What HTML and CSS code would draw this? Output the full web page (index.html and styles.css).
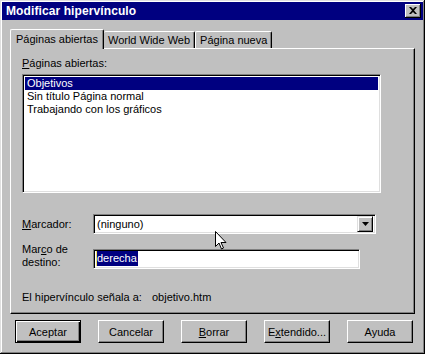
FILE: index.html
```html
<!DOCTYPE html>
<html lang="es">
<head>
<meta charset="utf-8">
<title>Modificar hipervínculo</title>
<link rel="stylesheet" href="styles.css">
</head>
<body>
<div class="window">
  <div class="titlebar">
    <span class="title">Modificar hipervínculo</span>
    <span class="close"><svg width="8" height="7" viewBox="0 0 8 7"><path d="M0 0h2l2 2 2-2h2L5 3.5 8 7H6L4 5 2 7H0l3-3.5z" fill="#000"/></svg></span>
  </div>
  <div class="content">
    <div class="tabs">
      <div class="tab active">Páginas abiertas</div>
      <div class="tab">World Wide Web</div>
      <div class="tab">Página nueva</div>
    </div>
    <div class="panel">
      <div class="label-top"><u>P</u>áginas abiertas:</div>
      <div class="listbox">
        <div class="item selected">Objetivos</div>
        <div class="item">Sin título Página normal</div>
        <div class="item">Trabajando con los gráficos</div>
      </div>
      <div class="field-row row-marcador">
        <div class="field-label"><u>M</u>arcador:</div>
        <div class="combo">
          <span class="combo-text">(ninguno)</span>
          <span class="drop"><svg width="7" height="4" viewBox="0 0 7 4"><path d="M0 0h7L3.5 4z" fill="#000"/></svg></span>
        </div>
      </div>
      <div class="field-row row-marco">
        <div class="field-label">Mar<u>c</u>o de<br>destino:</div>
        <div class="textbox"><span class="caret"></span><span class="sel">derecha</span></div>
      </div>
      <div class="info">
        <span class="info-label">El hipervínculo señala a:</span>
        <span class="info-value">objetivo.htm</span>
      </div>
    </div>
    <div class="buttons">
      <div class="btn default"><span>Aceptar</span></div>
      <div class="btn"><span>Cancelar</span></div>
      <div class="btn"><span><u>B</u>orrar</span></div>
      <div class="btn"><span>E<u>x</u>tendido...</span></div>
      <div class="btn"><span>Ayuda</span></div>
    </div>
  </div>
  <svg class="cursor" width="12" height="19" viewBox="0 0 12 19"><path d="M0.5 0.5v15l3.5-3.5 2.5 6 2-1-2.5-5.5h5z" fill="#fff" stroke="#000" stroke-width="1"/></svg>
</div>
</body>
</html>
```

FILE: styles.css
```css
html, body {
  margin: 0;
  padding: 0;
  background: #c0c0c0;
}
body {
  font-family: "Liberation Sans", Arial, sans-serif;
  font-size: 11px;
  color: #000;
}
.window {
  position: relative;
  width: 425px;
  height: 354px;
  box-sizing: border-box;
  padding: 2px;
  background: #c0c0c0;
  box-shadow: inset -1px -1px #000, inset 1px 1px #dfdfdf, inset -2px -2px #808080, inset 2px 2px #fff;
  overflow: hidden;
}
.titlebar {
  height: 18px;
  background: #000080;
  display: flex;
  align-items: center;
  justify-content: space-between;
  padding: 0 2px 0 4px;
}
.title {
  color: #fff;
  font-weight: bold;
  font-size: 12px;
  letter-spacing: 0.1px;
}
.close {
  width: 16px;
  height: 14px;
  box-sizing: border-box;
  background: #c0c0c0;
  box-shadow: inset -1px -1px #000, inset 1px 1px #fff, inset -2px -2px #808080;
  display: flex;
  align-items: center;
  justify-content: center;
  padding: 0 1px 1px 0;
}
.content {
  padding: 9px 8px 0 8px;
}
.tabs {
  display: flex;
  align-items: flex-end;
  height: 19px;
  position: relative;
  z-index: 2;
}
.tab {
  height: 17px;
  box-sizing: border-box;
  padding: 1px 4px 0 4px;
  line-height: 15px;
  border-top: 1px solid #fff;
  border-left: 1px solid #fff;
  border-right: 1px solid #000;
  box-shadow: inset -1px 0 #808080;
  border-radius: 2px 2px 0 0;
  white-space: nowrap;
  background: #c0c0c0;
}
.tab.active {
  height: 20px;
  margin-bottom: -1px;
  padding: 2px 5px 0 5px;
  line-height: 15px;
}
.tabs .tab.active + .tab {
  border-left: none;
}
.panel {
  height: 266px;
  box-sizing: border-box;
  border-top: 1px solid #fff;
  border-left: 1px solid #fff;
  border-right: 1px solid #000;
  border-bottom: 1px solid #000;
  box-shadow: inset -1px -1px #808080;
  padding: 8px 11px 0 11px;
  display: flex;
  flex-direction: column;
}
.label-top {
  height: 17px;
  line-height: 13px;
}
u { text-decoration: underline; text-underline-offset: 1px; }
.listbox {
  width: 359px;
  height: 119px;
  box-sizing: border-box;
  background: #fff;
  border-top: 1px solid #808080;
  border-left: 1px solid #808080;
  border-right: 1px solid #fff;
  border-bottom: 1px solid #fff;
  box-shadow: inset 1px 1px #000, inset -1px -1px #dfdfdf;
  padding: 2px 2px;
}
.item {
  height: 13px;
  line-height: 13px;
  padding-left: 2px;
  white-space: nowrap;
}
.item.selected {
  background: #000080;
  color: #fff;
}
.field-row {
  display: flex;
  align-items: center;
}
.row-marcador {
  margin-top: 21px;
}
.row-marco {
  margin-top: 14px;
}
.field-label {
  width: 71px;
  line-height: 13px;
}
.row-marco .field-label {
  margin-top: -5px;
}
.combo, .textbox {
  height: 20px;
  box-sizing: border-box;
  background: #fff;
  border-top: 1px solid #808080;
  border-left: 1px solid #808080;
  border-right: 1px solid #fff;
  border-bottom: 1px solid #fff;
  box-shadow: inset 1px 1px #000, inset -1px -1px #dfdfdf;
  display: flex;
  align-items: center;
}
.combo {
  width: 283px;
  padding: 0 2px 0 3px;
  justify-content: space-between;
}
.combo-text {
  line-height: 16px;
}
.drop {
  width: 16px;
  height: 16px;
  box-sizing: border-box;
  background: #c0c0c0;
  border-top: 1px solid #dfdfdf;
  border-left: 1px solid #dfdfdf;
  border-right: 1px solid #000;
  border-bottom: 1px solid #000;
  box-shadow: inset 1px 1px #fff, inset -1px -1px #808080;
  display: flex;
  align-items: center;
  justify-content: center;
}
.textbox {
  width: 267px;
  padding-left: 2px;
}
.caret {
  width: 1px;
  height: 15px;
  background: #f0e060;
}
.sel {
  background: #000080;
  color: #fff;
  line-height: 15px;
  height: 15px;
  padding-right: 1px;
}
.info {
  margin-top: 22px;
  display: flex;
  line-height: 13px;
}
.info-label {
  width: 130px;
}
.buttons {
  display: flex;
  gap: 17px;
  margin-top: 6px;
  padding-left: 5px;
}
.btn {
  width: 66px;
  height: 23px;
  box-sizing: border-box;
  background: #c0c0c0;
  border-top: 1px solid #fff;
  border-left: 1px solid #fff;
  border-right: 1px solid #000;
  border-bottom: 1px solid #000;
  box-shadow: inset -1px -1px #808080;
  display: flex;
  align-items: center;
  justify-content: center;
  font-size: 11px;
}
.btn.default {
  border: 1px solid #000;
  box-shadow: inset 1px 1px #fff, inset -1px -1px #000, inset -2px -2px #808080;
}
.cursor {
  position: absolute;
  left: 215px;
  top: 231px;
}
```
